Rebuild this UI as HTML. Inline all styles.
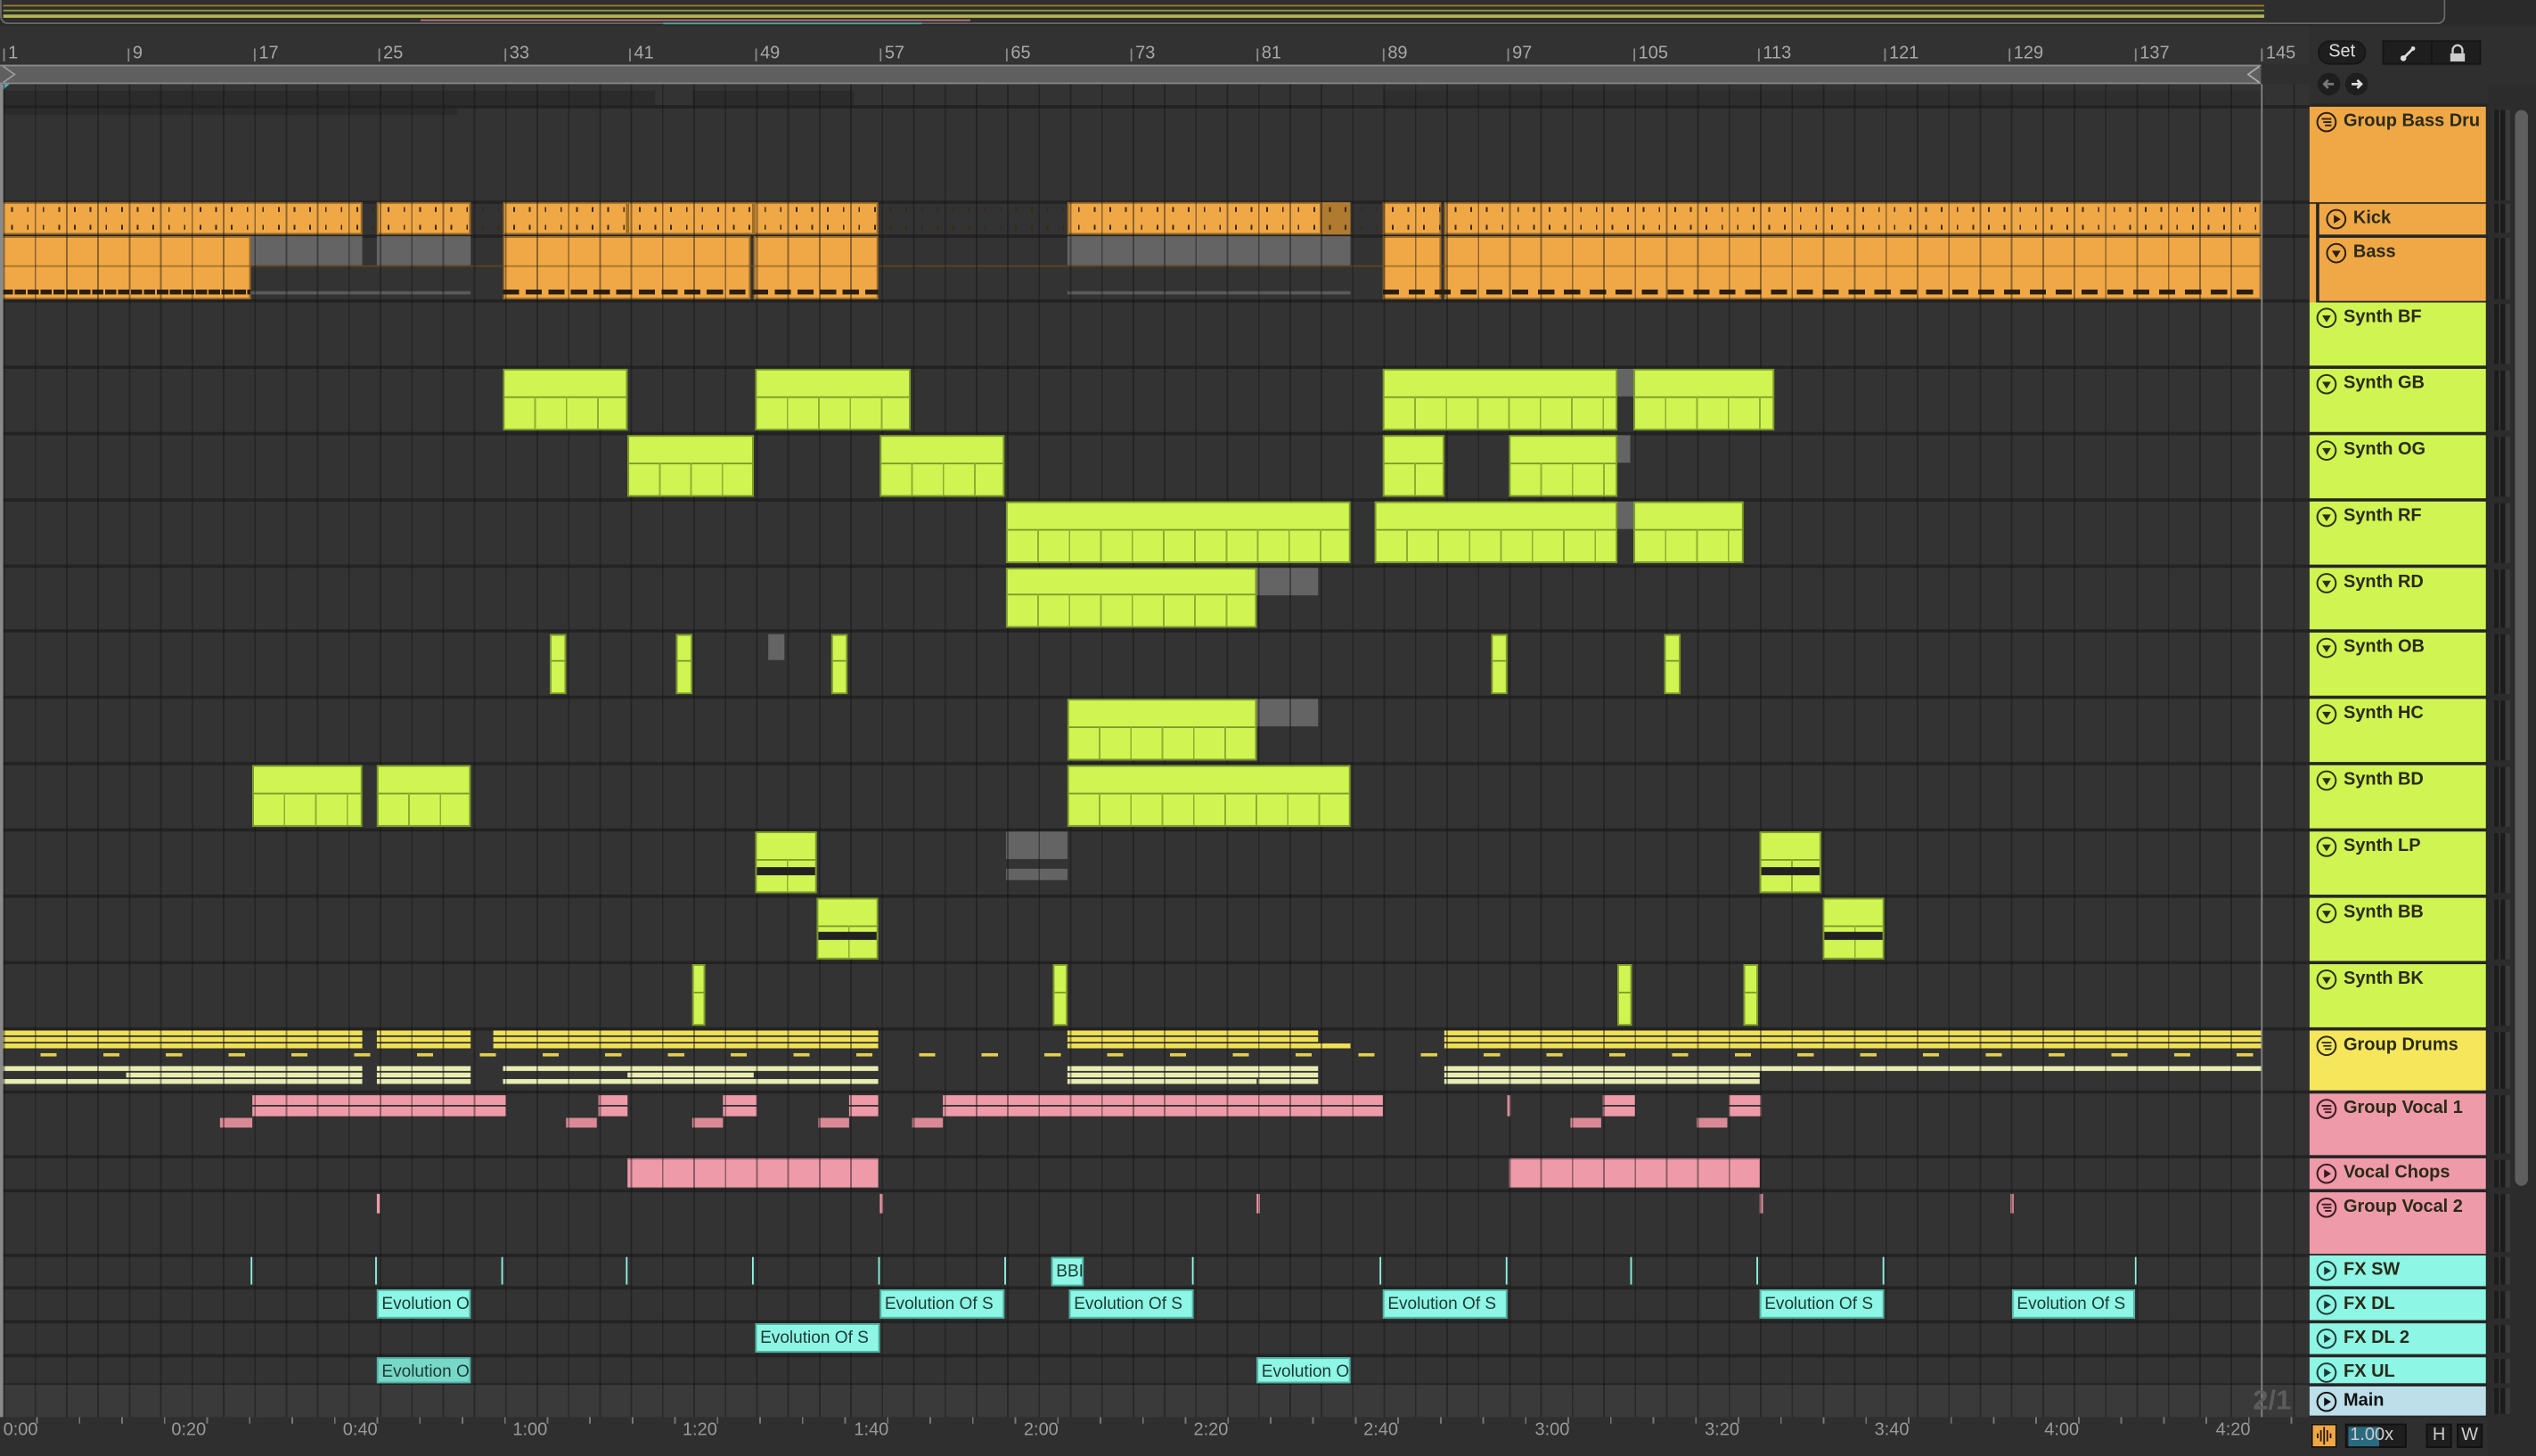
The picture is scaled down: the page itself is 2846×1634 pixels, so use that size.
<!DOCTYPE html>
<html><head><meta charset="utf-8">
<style>
*{margin:0;padding:0;box-sizing:border-box}
html,body{width:2846px;height:1634px;overflow:hidden;background:#2b2b2b}
#s{position:absolute;left:0;top:0;width:1568px;height:900px;transform:scale(1.81505,1.81556);transform-origin:0 0;font-family:"Liberation Sans",sans-serif;background:#2f2f2f}
.a{position:absolute}
#arr{position:absolute;left:0;top:52px;width:1428px;height:824px;background:#333;overflow:hidden}
#grid{position:absolute;left:1.5px;top:0;width:1430px;height:824px;background:repeating-linear-gradient(90deg,rgba(20,20,20,.45) 0 1px,transparent 1px 19.396px);pointer-events:none;z-index:1}
.sep{position:absolute;left:0;width:1428px;height:1.5px;background:#232323}
.o{position:absolute;background:#f0a846;border:1px solid #9a6a24}
.g{position:absolute;background:#646464}
.l{position:absolute;background:#d0f552;border:1px solid #7c9a2a;z-index:2}
.l::before{content:"";position:absolute;left:0;right:0;top:44%;height:1px;background:#7c9a2a}
.l::after{content:"";position:absolute;left:0;right:0;top:44%;bottom:0;background:repeating-linear-gradient(90deg,transparent 0 18.4px,#8fae33 18.4px 19.4px)}
.y{position:absolute;height:3px;background:#f0e055}
.p{position:absolute;height:3px;background:#e8ecb0}
.k{position:absolute;background:#ef9aa8}
.c{position:absolute;background:#8ef6e4;border:1px solid #4fb5a5;font-size:10.5px;color:#1d3a36;line-height:16px;padding-left:2px;overflow:hidden;white-space:nowrap;z-index:2}
.t{position:absolute;width:1px;background:#8ef6e4}
.h{position:absolute;left:1428px;width:109px;font-size:11px;font-weight:bold;color:#2a2a1a;padding-left:21px;line-height:18px;white-space:nowrap;overflow:hidden}
.h svg{position:absolute;left:4px;top:3px}
.m{position:absolute;left:1542px;width:10px;background:repeating-linear-gradient(90deg,#1c1c1c 0 3px,#3a3a3a 3px 4px,#1c1c1c 4px 7px,#3a3a3a 7px 10px)}
.rn{position:absolute;top:27px;font-size:11px;color:#a8a8a8}
.rt{position:absolute;top:30px;width:1px;height:8px;background:#888}
.bt{position:absolute;top:878px;font-size:11px;color:#999}
</style></head><body><div id="s">
<div class="a" style="left:0;top:0;width:1568px;height:16px;background:#2a2a2a"></div>
<div class="a" style="left:0;top:0;width:1512px;height:15px;border:1.5px solid #6a6a6a;border-top:none;border-radius:0 0 5px 5px;background:#2e2e2e"></div>
<div class="a" style="left:2px;top:3px;width:1398px;height:1px;background:#a7782f"></div>
<div class="a" style="left:2px;top:6px;width:1398px;height:1px;background:#8aa03a"></div>
<div class="a" style="left:2px;top:9px;width:1398px;height:2px;background:#b7b452"></div>
<div class="a" style="left:260px;top:12px;width:340px;height:1px;background:#b7707a"></div>
<div class="a" style="left:410px;top:14px;width:160px;height:1px;background:#4aa99a"></div>
<div class="a" style="left:0;top:16px;width:1428px;height:24px;background:#323232"></div>
<div class="a" style="left:0;top:40px;width:1398px;height:12px;background:#5f5f5f;border-top:1px solid #8a8a8a;border-bottom:1px solid #8a8a8a"></div>
<svg class="a" style="left:1px;top:40px" width="10" height="12"><path d="M1 1 L8 6 L1 11" fill="none" stroke="#999" stroke-width="1"/></svg>
<svg class="a" style="left:1388px;top:40px" width="10" height="12"><path d="M9 1 L2 6 L9 11" fill="none" stroke="#aaa" stroke-width="1"/></svg>
<div class="rt" style="left:2px"></div><div class="rn" style="left:5px">1</div>
<div class="rt" style="left:79px"></div><div class="rn" style="left:82px">9</div>
<div class="rt" style="left:157px"></div><div class="rn" style="left:160px">17</div>
<div class="rt" style="left:234px"></div><div class="rn" style="left:237px">25</div>
<div class="rt" style="left:312px"></div><div class="rn" style="left:315px">33</div>
<div class="rt" style="left:389px"></div><div class="rn" style="left:392px">41</div>
<div class="rt" style="left:467px"></div><div class="rn" style="left:470px">49</div>
<div class="rt" style="left:544px"></div><div class="rn" style="left:547px">57</div>
<div class="rt" style="left:622px"></div><div class="rn" style="left:625px">65</div>
<div class="rt" style="left:699px"></div><div class="rn" style="left:702px">73</div>
<div class="rt" style="left:777px"></div><div class="rn" style="left:780px">81</div>
<div class="rt" style="left:855px"></div><div class="rn" style="left:858px">89</div>
<div class="rt" style="left:932px"></div><div class="rn" style="left:935px">97</div>
<div class="rt" style="left:1010px"></div><div class="rn" style="left:1013px">105</div>
<div class="rt" style="left:1087px"></div><div class="rn" style="left:1090px">113</div>
<div class="rt" style="left:1165px"></div><div class="rn" style="left:1168px">121</div>
<div class="rt" style="left:1242px"></div><div class="rn" style="left:1245px">129</div>
<div class="rt" style="left:1320px"></div><div class="rn" style="left:1323px">137</div>
<div class="rt" style="left:1398px"></div><div class="rn" style="left:1401px">145</div>
<div class="a" style="left:1428px;top:64px;width:110px;height:812px;background:#262626"></div>
<div class="a" style="left:1538px;top:52px;width:30px;height:848px;background:#2c2c2c"></div>
<div class="a" style="left:1433px;top:25px;width:30px;height:15px;border-radius:8px;background:#1e1e1e;border:1px solid #161616;color:#ddd;font-size:11px;text-align:center;line-height:13px">Set</div>
<div class="a" style="left:1473px;top:25px;width:31px;height:15px;background:#1e1e1e;border:1px solid #151515"><svg width="31" height="15"><path d="M12 10 L18 4" stroke="#ddd" stroke-width="1.5"/><circle cx="12" cy="10" r="1.8" fill="#ddd"/><circle cx="18" cy="4" r="1.3" fill="#ddd"/></svg></div>
<div class="a" style="left:1503px;top:25px;width:31px;height:15px;background:#1e1e1e;border:1px solid #151515"><svg width="31" height="15"><path d="M12.5 7 V5 a3 3 0 0 1 6 0 V7" fill="none" stroke="#ccc" stroke-width="1.3"/><rect x="11" y="7" width="9" height="5" fill="#ccc"/></svg></div>
<div class="a" style="left:1433px;top:45px;width:14px;height:14px;border-radius:7px;background:#1e1e1e"><svg width="14" height="14"><path d="M10 7 H4 M6.5 4.5 L4 7 L6.5 9.5" fill="none" stroke="#777" stroke-width="1.5"/></svg></div>
<div class="a" style="left:1450px;top:45px;width:14px;height:14px;border-radius:7px;background:#1e1e1e"><svg width="14" height="14"><path d="M4 7 H10 M7.5 4.5 L10 7 L7.5 9.5" fill="none" stroke="#ddd" stroke-width="1.5"/></svg></div>

<div id="arr">
<div class="a" style="left:0;top:0;width:6px;height:5px;background:#4ab8d0;clip-path:polygon(0 0,100% 0,0 100%)"></div>
<div class="a" style="left:0;top:4px;width:405px;height:10px;background:#2b2b2b"></div>
<div class="a" style="left:428px;top:4px;width:100px;height:10px;background:#2b2b2b"></div>
<div class="a" style="left:855px;top:4px;width:545px;height:10px;background:#2e2e2e"></div>
<div class="a" style="left:0;top:14px;width:283px;height:5px;background:#2c2c2c"></div>
<div class="sep" style="top:13px"></div>
<div class="sep" style="top:72px"></div><div class="sep" style="top:93px"></div><div class="sep" style="top:133px"></div>
<div class="sep" style="top:174px"></div><div class="sep" style="top:215px"></div><div class="sep" style="top:256px"></div>
<div class="sep" style="top:297px"></div><div class="sep" style="top:337px"></div><div class="sep" style="top:378px"></div>
<div class="sep" style="top:419px"></div><div class="sep" style="top:460px"></div><div class="sep" style="top:501px"></div>
<div class="sep" style="top:542px"></div><div class="sep" style="top:583px"></div><div class="sep" style="top:622px"></div>
<div class="sep" style="top:662px"></div><div class="sep" style="top:683px"></div><div class="sep" style="top:723px"></div>
<div class="sep" style="top:743px"></div><div class="sep" style="top:764px"></div><div class="sep" style="top:785px"></div>
<div class="sep" style="top:803px"></div>
<div class="a" style="left:0;top:804px;width:1428px;height:20px;background:#3a3a3a"></div>
<div class="o" style="left:1px;top:73px;width:223px;height:20px"></div>
<div class="o" style="left:233px;top:73px;width:58px;height:20px"></div>
<div class="o" style="left:311px;top:73px;width:77px;height:20px"></div>
<div class="o" style="left:388px;top:73px;width:78px;height:20px"></div>
<div class="o" style="left:466px;top:73px;width:77px;height:20px"></div>
<div class="o" style="left:660px;top:73px;width:157px;height:20px"></div>
<div class="a" style="left:817px;top:73px;width:18px;height:20px;background:#b07a30"></div>
<div class="o" style="left:855px;top:73px;width:36px;height:20px"></div>
<div class="o" style="left:893px;top:73px;width:505px;height:20px"></div>
<div class="a" style="left:0;top:76px;width:1398px;height:3px;background:repeating-linear-gradient(90deg,transparent 0 7px,#3a2a10 7px 8px,transparent 8px 9.7px)"></div>
<div class="a" style="left:0;top:87px;width:1398px;height:3px;background:repeating-linear-gradient(90deg,transparent 0 7px,#3a2a10 7px 8px,transparent 8px 9.7px)"></div>
<div class="o" style="left:1px;top:94px;width:154px;height:39px"></div>
<div class="g" style="left:155px;top:94px;width:69px;height:18px"></div>
<div class="g" style="left:233px;top:94px;width:58px;height:18px"></div>
<div class="o" style="left:311px;top:94px;width:153px;height:39px"></div>
<div class="o" style="left:466px;top:94px;width:77px;height:39px"></div>
<div class="g" style="left:660px;top:94px;width:175px;height:18px"></div>
<div class="o" style="left:855px;top:94px;width:36px;height:39px"></div>
<div class="o" style="left:893px;top:94px;width:505px;height:39px"></div>
<div class="a" style="left:1px;top:112px;width:1397px;height:1px;background:rgba(120,80,20,.6)"></div>
<div class="a" style="left:1px;top:127px;width:154px;height:3px;background:repeating-linear-gradient(90deg,#2a1e0c 0 7px,transparent 7px 8px)"></div>
<div class="a" style="left:155px;top:128px;width:136px;height:2px;background:#5a5a5a"></div>
<div class="a" style="left:660px;top:128px;width:175px;height:2px;background:#5a5a5a"></div>
<div class="a" style="left:311px;top:127px;width:232px;height:3px;background:repeating-linear-gradient(90deg,#2a1e0c 0 10px,transparent 10px 14px)"></div>
<div class="a" style="left:855px;top:127px;width:543px;height:3px;background:repeating-linear-gradient(90deg,#2a1e0c 0 10px,transparent 10px 16px)"></div>
<div class="l" style="left:311px;top:176px;width:77px;height:38px"></div>
<div class="l" style="left:467px;top:176px;width:96px;height:38px"></div>
<div class="l" style="left:855px;top:176px;width:145px;height:38px"></div>
<div class="g" style="left:1000px;top:176px;width:10px;height:17px"></div>
<div class="l" style="left:1010px;top:176px;width:87px;height:38px"></div>
<div class="l" style="left:388px;top:217px;width:78px;height:38px"></div>
<div class="l" style="left:544px;top:217px;width:77px;height:38px"></div>
<div class="l" style="left:855px;top:217px;width:38px;height:38px"></div>
<div class="l" style="left:933px;top:217px;width:67px;height:38px"></div>
<div class="g" style="left:1000px;top:217px;width:8px;height:17px"></div>
<div class="l" style="left:622px;top:258px;width:213px;height:38px"></div>
<div class="l" style="left:850px;top:258px;width:150px;height:38px"></div>
<div class="g" style="left:1000px;top:258px;width:10px;height:17px"></div>
<div class="l" style="left:1010px;top:258px;width:68px;height:38px"></div>
<div class="l" style="left:622px;top:299px;width:155px;height:37px"></div>
<div class="g" style="left:777px;top:299px;width:38px;height:17px"></div>
<div class="l" style="left:340px;top:340px;width:10px;height:37px"></div>
<div class="l" style="left:418px;top:340px;width:10px;height:37px"></div>
<div class="g" style="left:475px;top:340px;width:10px;height:16px"></div>
<div class="l" style="left:514px;top:340px;width:10px;height:37px"></div>
<div class="l" style="left:922px;top:340px;width:10px;height:37px"></div>
<div class="l" style="left:1029px;top:340px;width:10px;height:37px"></div>
<div class="l" style="left:660px;top:380px;width:117px;height:38px"></div>
<div class="g" style="left:777px;top:380px;width:38px;height:17px"></div>
<div class="l" style="left:156px;top:421px;width:68px;height:38px"></div>
<div class="l" style="left:233px;top:421px;width:58px;height:38px"></div>
<div class="l" style="left:660px;top:421px;width:175px;height:38px"></div>
<div class="l" style="left:467px;top:462px;width:38px;height:38px"></div>
<div class="g" style="left:622px;top:462px;width:38px;height:17px"></div>
<div class="g" style="left:622px;top:485px;width:38px;height:7px"></div>
<div class="l" style="left:1088px;top:462px;width:38px;height:38px"></div>
<div class="a" style="left:468px;top:484px;width:36px;height:5px;background:#222;z-index:3"></div>
<div class="a" style="left:1089px;top:484px;width:36px;height:5px;background:#222;z-index:3"></div>
<div class="l" style="left:505px;top:503px;width:38px;height:38px"></div>
<div class="l" style="left:1127px;top:503px;width:38px;height:38px"></div>
<div class="a" style="left:506px;top:524px;width:36px;height:5px;background:#222;z-index:3"></div>
<div class="a" style="left:1128px;top:524px;width:36px;height:5px;background:#222;z-index:3"></div>
<div class="l" style="left:428px;top:544px;width:8px;height:38px"></div>
<div class="l" style="left:651px;top:544px;width:9px;height:38px"></div>
<div class="l" style="left:1000px;top:544px;width:9px;height:38px"></div>
<div class="l" style="left:1078px;top:544px;width:9px;height:38px"></div>
<div class="y" style="left:1px;top:585px;width:223px"></div><div class="y" style="left:1px;top:589px;width:223px"></div><div class="y" style="left:1px;top:593px;width:223px"></div>
<div class="y" style="left:233px;top:585px;width:58px"></div><div class="y" style="left:233px;top:589px;width:58px"></div><div class="y" style="left:233px;top:593px;width:58px"></div>
<div class="y" style="left:305px;top:585px;width:238px"></div><div class="y" style="left:305px;top:589px;width:238px"></div><div class="y" style="left:305px;top:593px;width:238px"></div>
<div class="y" style="left:660px;top:585px;width:155px"></div><div class="y" style="left:660px;top:589px;width:155px"></div><div class="y" style="left:660px;top:593px;width:175px"></div>
<div class="y" style="left:893px;top:585px;width:505px"></div><div class="y" style="left:893px;top:589px;width:505px"></div><div class="y" style="left:893px;top:593px;width:505px"></div>
<div class="a" style="left:0;top:599px;width:1398px;height:2px;background:repeating-linear-gradient(90deg,transparent 0 25px,#e0d050 25px 35px,transparent 35px 38.8px)"></div>
<div class="p" style="left:1px;top:607px;width:223px"></div><div class="p" style="left:78px;top:611px;width:146px"></div><div class="p" style="left:1px;top:615px;width:223px"></div>
<div class="p" style="left:233px;top:607px;width:58px"></div><div class="p" style="left:233px;top:611px;width:58px"></div><div class="p" style="left:233px;top:615px;width:58px"></div>
<div class="p" style="left:311px;top:607px;width:232px"></div><div class="p" style="left:388px;top:611px;width:78px"></div><div class="p" style="left:311px;top:615px;width:232px"></div>
<div class="p" style="left:660px;top:607px;width:155px"></div><div class="p" style="left:660px;top:611px;width:155px"></div><div class="p" style="left:778px;top:615px;width:37px"></div><div class="p" style="left:660px;top:615px;width:117px"></div>
<div class="p" style="left:893px;top:607px;width:505px"></div><div class="p" style="left:893px;top:611px;width:195px"></div><div class="p" style="left:893px;top:615px;width:195px"></div>
<div class="k" style="left:156px;top:625px;width:157px;height:6px"></div><div class="k" style="left:156px;top:632px;width:157px;height:6px"></div>
<div class="k" style="left:370px;top:625px;width:18px;height:6px"></div><div class="k" style="left:370px;top:632px;width:18px;height:6px"></div>
<div class="k" style="left:447px;top:625px;width:21px;height:6px"></div><div class="k" style="left:447px;top:632px;width:21px;height:6px"></div>
<div class="k" style="left:525px;top:625px;width:18px;height:6px"></div><div class="k" style="left:525px;top:632px;width:18px;height:6px"></div>
<div class="k" style="left:583px;top:625px;width:272px;height:6px"></div><div class="k" style="left:583px;top:632px;width:272px;height:6px"></div>
<div class="k" style="left:991px;top:625px;width:20px;height:6px"></div><div class="k" style="left:991px;top:632px;width:20px;height:6px"></div>
<div class="k" style="left:1069px;top:625px;width:20px;height:6px"></div><div class="k" style="left:1069px;top:632px;width:20px;height:6px"></div>
<div class="k" style="left:136px;top:639px;width:20px;height:6px;background:#d98a96"></div>
<div class="k" style="left:350px;top:639px;width:19px;height:6px;background:#d98a96"></div>
<div class="k" style="left:428px;top:639px;width:19px;height:6px;background:#d98a96"></div>
<div class="k" style="left:506px;top:639px;width:19px;height:6px;background:#d98a96"></div>
<div class="k" style="left:564px;top:639px;width:19px;height:6px;background:#d98a96"></div>
<div class="k" style="left:971px;top:639px;width:19px;height:6px;background:#d98a96"></div>
<div class="k" style="left:1049px;top:639px;width:19px;height:6px;background:#d98a96"></div>
<div class="k" style="left:932px;top:625px;width:2px;height:13px"></div>
<div class="k" style="left:388px;top:664px;width:155px;height:18px;border-top:1px solid #c07a86"></div>
<div class="k" style="left:933px;top:664px;width:155px;height:18px;border-top:1px solid #c07a86"></div>
<div class="k" style="left:233px;top:686px;width:2px;height:12px"></div>
<div class="k" style="left:544px;top:686px;width:2px;height:12px"></div>
<div class="k" style="left:777px;top:686px;width:2px;height:12px"></div>
<div class="k" style="left:1088px;top:686px;width:2px;height:12px"></div>
<div class="k" style="left:1243px;top:686px;width:2px;height:12px"></div>
<div class="t" style="left:155px;top:725px;height:17px"></div><div class="t" style="left:232px;top:725px;height:17px"></div><div class="t" style="left:310px;top:725px;height:17px"></div><div class="t" style="left:387px;top:725px;height:17px"></div><div class="t" style="left:465px;top:725px;height:17px"></div><div class="t" style="left:543px;top:725px;height:17px"></div><div class="t" style="left:621px;top:725px;height:17px"></div><div class="t" style="left:737px;top:725px;height:17px"></div><div class="t" style="left:853px;top:725px;height:17px"></div><div class="t" style="left:931px;top:725px;height:17px"></div><div class="t" style="left:1008px;top:725px;height:17px"></div><div class="t" style="left:1086px;top:725px;height:17px"></div><div class="t" style="left:1164px;top:725px;height:17px"></div><div class="t" style="left:1320px;top:725px;height:17px"></div>
<div class="c" style="left:650px;top:725px;width:20px;height:18px">BBI</div>
<div class="c" style="left:233px;top:745px;width:58px;height:18px">Evolution Of S</div>
<div class="c" style="left:544px;top:745px;width:77px;height:18px">Evolution Of S</div>
<div class="c" style="left:661px;top:745px;width:77px;height:18px">Evolution Of S</div>
<div class="c" style="left:855px;top:745px;width:77px;height:18px">Evolution Of S</div>
<div class="c" style="left:1088px;top:745px;width:77px;height:18px">Evolution Of S</div>
<div class="c" style="left:1244px;top:745px;width:76px;height:18px">Evolution Of S</div>
<div class="c" style="left:467px;top:766px;width:77px;height:18px">Evolution Of S</div>
<div class="c" style="left:233px;top:787px;width:58px;height:16px;background:#78d8c8">Evolution Of S</div>
<div class="c" style="left:777px;top:787px;width:58px;height:16px">Evolution Of S</div>
<div id="grid"></div>
<div class="a" style="left:1398px;top:0;width:1px;height:824px;background:#8a8a8a;z-index:4"></div>
<div class="a" style="left:0;top:0;width:2px;height:824px;background:#8a8a8a;z-index:4"></div>
<div class="a" style="left:1393px;top:804px;font-size:17px;color:#5c5c5c;font-weight:bold;z-index:4">2/1</div>
</div>
<div class="a" style="left:1555px;top:68px;width:8px;height:665px;border-radius:4px;background:#5e5e5e"></div>
<div class="h" style="top:66px;height:59px;background:#f0a846"><svg width="13" height="13"><circle cx="6.5" cy="6.5" r="5.7" fill="none" stroke="#2a2010" stroke-width="1.1"/><path d="M3.5 4.5h6M4.5 6.5h5M5.5 8.5h4" stroke="#2a2010" stroke-width="1"/></svg>Group Bass Dru</div>
<div class="a" style="left:1432px;top:126px;width:106px;height:60px;background:#262626"></div>
<div class="h" style="left:1434px;width:103px;top:126px;height:19px;background:#f0a846"><svg width="13" height="13"><circle cx="6.5" cy="6.5" r="5.7" fill="none" stroke="#2a2010" stroke-width="1.1"/><path d="M5 3.8 L9.3 6.5 L5 9.2Z" fill="#2a2010"/></svg>Kick</div>
<div class="h" style="left:1434px;width:103px;top:147px;height:39px;background:#f0a846"><svg width="13" height="13"><circle cx="6.5" cy="6.5" r="5.7" fill="none" stroke="#2a2010" stroke-width="1.1"/><path d="M3.8 5 L9.2 5 L6.5 9.3Z" fill="#2a2010"/></svg>Bass</div>
<div class="a" style="left:1428px;top:126px;width:4px;height:61px;background:#f0a846"></div>
<div class="h" style="top:187px;height:39px;background:#d0f552"><svg width="13" height="13"><circle cx="6.5" cy="6.5" r="5.7" fill="none" stroke="#2a3010" stroke-width="1.1"/><path d="M3.8 5 L9.2 5 L6.5 9.3Z" fill="#2a3010"/></svg>Synth BF</div>
<div class="h" style="top:228px;height:39px;background:#d0f552"><svg width="13" height="13"><circle cx="6.5" cy="6.5" r="5.7" fill="none" stroke="#2a3010" stroke-width="1.1"/><path d="M3.8 5 L9.2 5 L6.5 9.3Z" fill="#2a3010"/></svg>Synth GB</div>
<div class="h" style="top:269px;height:39px;background:#d0f552"><svg width="13" height="13"><circle cx="6.5" cy="6.5" r="5.7" fill="none" stroke="#2a3010" stroke-width="1.1"/><path d="M3.8 5 L9.2 5 L6.5 9.3Z" fill="#2a3010"/></svg>Synth OG</div>
<div class="h" style="top:310px;height:39px;background:#d0f552"><svg width="13" height="13"><circle cx="6.5" cy="6.5" r="5.7" fill="none" stroke="#2a3010" stroke-width="1.1"/><path d="M3.8 5 L9.2 5 L6.5 9.3Z" fill="#2a3010"/></svg>Synth RF</div>
<div class="h" style="top:351px;height:38px;background:#d0f552"><svg width="13" height="13"><circle cx="6.5" cy="6.5" r="5.7" fill="none" stroke="#2a3010" stroke-width="1.1"/><path d="M3.8 5 L9.2 5 L6.5 9.3Z" fill="#2a3010"/></svg>Synth RD</div>
<div class="h" style="top:391px;height:39px;background:#d0f552"><svg width="13" height="13"><circle cx="6.5" cy="6.5" r="5.7" fill="none" stroke="#2a3010" stroke-width="1.1"/><path d="M3.8 5 L9.2 5 L6.5 9.3Z" fill="#2a3010"/></svg>Synth OB</div>
<div class="h" style="top:432px;height:39px;background:#d0f552"><svg width="13" height="13"><circle cx="6.5" cy="6.5" r="5.7" fill="none" stroke="#2a3010" stroke-width="1.1"/><path d="M3.8 5 L9.2 5 L6.5 9.3Z" fill="#2a3010"/></svg>Synth HC</div>
<div class="h" style="top:473px;height:39px;background:#d0f552"><svg width="13" height="13"><circle cx="6.5" cy="6.5" r="5.7" fill="none" stroke="#2a3010" stroke-width="1.1"/><path d="M3.8 5 L9.2 5 L6.5 9.3Z" fill="#2a3010"/></svg>Synth BD</div>
<div class="h" style="top:514px;height:39px;background:#d0f552"><svg width="13" height="13"><circle cx="6.5" cy="6.5" r="5.7" fill="none" stroke="#2a3010" stroke-width="1.1"/><path d="M3.8 5 L9.2 5 L6.5 9.3Z" fill="#2a3010"/></svg>Synth LP</div>
<div class="h" style="top:555px;height:39px;background:#d0f552"><svg width="13" height="13"><circle cx="6.5" cy="6.5" r="5.7" fill="none" stroke="#2a3010" stroke-width="1.1"/><path d="M3.8 5 L9.2 5 L6.5 9.3Z" fill="#2a3010"/></svg>Synth BB</div>
<div class="h" style="top:596px;height:39px;background:#d0f552"><svg width="13" height="13"><circle cx="6.5" cy="6.5" r="5.7" fill="none" stroke="#2a3010" stroke-width="1.1"/><path d="M3.8 5 L9.2 5 L6.5 9.3Z" fill="#2a3010"/></svg>Synth BK</div>
<div class="h" style="top:637px;height:37px;background:#f5e65c"><svg width="13" height="13"><circle cx="6.5" cy="6.5" r="5.7" fill="none" stroke="#2a2a10" stroke-width="1.1"/><path d="M3.5 4.5h6M4.5 6.5h5M5.5 8.5h4" stroke="#2a2a10" stroke-width="1"/></svg>Group Drums</div>
<div class="h" style="top:676px;height:38px;background:#ef9aa8"><svg width="13" height="13"><circle cx="6.5" cy="6.5" r="5.7" fill="none" stroke="#3a1a20" stroke-width="1.1"/><path d="M3.5 4.5h6M4.5 6.5h5M5.5 8.5h4" stroke="#3a1a20" stroke-width="1"/></svg>Group Vocal 1</div>
<div class="h" style="top:716px;height:19px;background:#ef9aa8"><svg width="13" height="13"><circle cx="6.5" cy="6.5" r="5.7" fill="none" stroke="#3a1a20" stroke-width="1.1"/><path d="M5 3.8 L9.3 6.5 L5 9.2Z" fill="#3a1a20"/></svg>Vocal Chops</div>
<div class="h" style="top:737px;height:38px;background:#ef9aa8"><svg width="13" height="13"><circle cx="6.5" cy="6.5" r="5.7" fill="none" stroke="#3a1a20" stroke-width="1.1"/><path d="M3.5 4.5h6M4.5 6.5h5M5.5 8.5h4" stroke="#3a1a20" stroke-width="1"/></svg>Group Vocal 2</div>
<div class="h" style="top:776px;height:19px;background:#8ef6e4"><svg width="13" height="13"><circle cx="6.5" cy="6.5" r="5.7" fill="none" stroke="#1a3a36" stroke-width="1.1"/><path d="M5 3.8 L9.3 6.5 L5 9.2Z" fill="#1a3a36"/></svg>FX SW</div>
<div class="h" style="top:797px;height:19px;background:#8ef6e4"><svg width="13" height="13"><circle cx="6.5" cy="6.5" r="5.7" fill="none" stroke="#1a3a36" stroke-width="1.1"/><path d="M5 3.8 L9.3 6.5 L5 9.2Z" fill="#1a3a36"/></svg>FX DL</div>
<div class="h" style="top:818px;height:19px;background:#8ef6e4"><svg width="13" height="13"><circle cx="6.5" cy="6.5" r="5.7" fill="none" stroke="#1a3a36" stroke-width="1.1"/><path d="M5 3.8 L9.3 6.5 L5 9.2Z" fill="#1a3a36"/></svg>FX DL 2</div>
<div class="h" style="top:839px;height:16px;background:#8ef6e4"><svg width="13" height="13"><circle cx="6.5" cy="6.5" r="5.7" fill="none" stroke="#1a3a36" stroke-width="1.1"/><path d="M5 3.8 L9.3 6.5 L5 9.2Z" fill="#1a3a36"/></svg>FX UL</div>
<div class="h" style="top:857px;height:18px;background:#bcdfe9;color:#111"><svg width="13" height="13"><circle cx="6.5" cy="6.5" r="5.7" fill="none" stroke="#111" stroke-width="1.1"/><path d="M5 3.8 L9.3 6.5 L5 9.2Z" fill="#111"/></svg>Main</div>
<div class="m" style="top:68px;height:56px"></div><div class="m" style="top:126px;height:18px"></div><div class="m" style="top:147px;height:38px"></div>
<div class="m" style="top:188px;height:37px"></div><div class="m" style="top:229px;height:37px"></div><div class="m" style="top:270px;height:37px"></div><div class="m" style="top:311px;height:37px"></div><div class="m" style="top:352px;height:36px"></div><div class="m" style="top:392px;height:37px"></div><div class="m" style="top:433px;height:37px"></div><div class="m" style="top:474px;height:37px"></div><div class="m" style="top:515px;height:37px"></div><div class="m" style="top:556px;height:37px"></div><div class="m" style="top:597px;height:37px"></div><div class="m" style="top:638px;height:35px"></div><div class="m" style="top:677px;height:36px"></div><div class="m" style="top:717px;height:17px"></div><div class="m" style="top:738px;height:36px"></div><div class="m" style="top:777px;height:17px"></div><div class="m" style="top:798px;height:17px"></div><div class="m" style="top:819px;height:17px"></div><div class="m" style="top:840px;height:15px"></div><div class="m" style="top:858px;height:16px"></div>
<div class="a" style="left:0;top:876px;width:1428px;height:24px;background:#2f2f2f"></div>
<div class="a" style="left:0;top:876px;width:1428px;height:4px;background:repeating-linear-gradient(90deg,transparent 0 22.4px,#777 22.4px 23.4px,transparent 23.4px 26.3px)"></div>
<div class="bt" style="left:2px">0:00</div><div class="bt" style="left:106px">0:20</div><div class="bt" style="left:212px">0:40</div><div class="bt" style="left:317px">1:00</div><div class="bt" style="left:422px">1:20</div><div class="bt" style="left:528px">1:40</div><div class="bt" style="left:633px">2:00</div><div class="bt" style="left:738px">2:20</div><div class="bt" style="left:843px">2:40</div><div class="bt" style="left:949px">3:00</div><div class="bt" style="left:1054px">3:20</div><div class="bt" style="left:1159px">3:40</div><div class="bt" style="left:1264px">4:00</div><div class="bt" style="left:1370px">4:20</div>
<div class="a" style="left:1429px;top:880px;width:16px;height:15px;background:#f0a846;border:1px solid #111"><svg width="14" height="13"><path d="M3 5v3M5 3v7M7 1v11M9 3v7M11 5v3" stroke="#2a1a08" stroke-width="1"/></svg></div>
<div class="a" style="left:1450px;top:880px;width:38px;height:15px;background:#1e1e1e;border:1px solid #111;font-size:11px;color:#ccc;line-height:13px;padding-left:2px"><span style="background:#2a6a80;position:absolute;left:1px;top:1px;width:19px;height:12px"></span><span style="position:relative">1.00x</span></div>
<div class="a" style="left:1500px;top:880px;width:16px;height:15px;background:#1e1e1e;border:1px solid #111;font-size:11px;color:#ccc;text-align:center;line-height:13px">H</div>
<div class="a" style="left:1519px;top:880px;width:16px;height:15px;background:#1e1e1e;border:1px solid #111;font-size:11px;color:#ccc;text-align:center;line-height:13px">W</div>
</div></body></html>
